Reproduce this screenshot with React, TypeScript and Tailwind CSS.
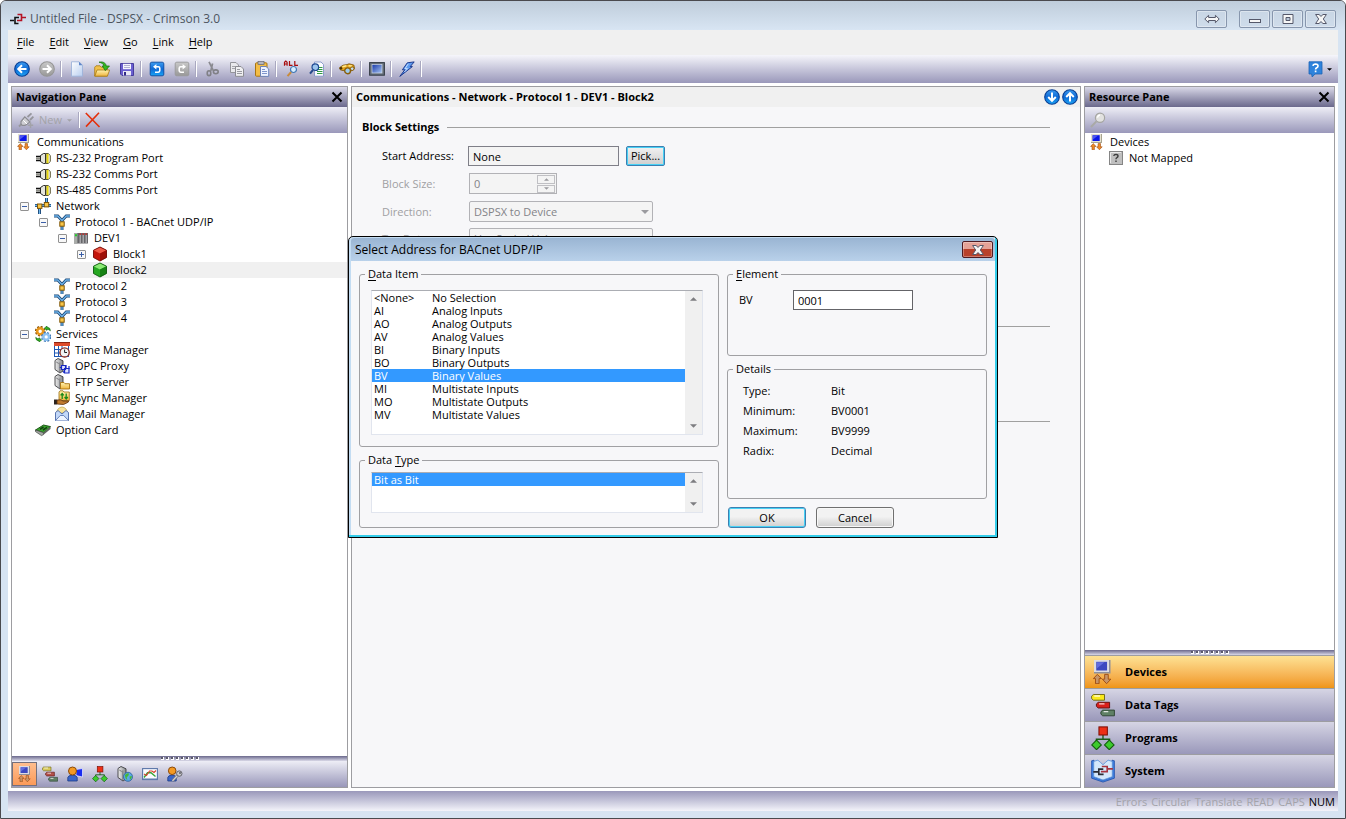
import { useState } from "react";
import type { ReactNode } from "react";
import clsx from "clsx";

function Svg({ children, className = "size-4" }: { children: ReactNode; className?: string }) {
  return (
    <svg viewBox="0 0 16 16" className={clsx("shrink-0", className)} aria-hidden="true">
      {children}
    </svg>
  );
}

/* ---------- shared gradients ---------- */

function Gradients() {
  return (
    <svg className="absolute size-0" aria-hidden="true">
      <defs>
        <linearGradient id="gBlue" x1="0" y1="0" x2="0" y2="1">
          <stop offset="0" stopColor="#3d9cf0" />
          <stop offset="0.5" stopColor="#0f6ad6" />
          <stop offset="1" stopColor="#1ba4f4" />
        </linearGradient>
        <linearGradient id="gGrey" x1="0" y1="0" x2="0" y2="1">
          <stop offset="0" stopColor="#c9c9c9" />
          <stop offset="1" stopColor="#989898" />
        </linearGradient>
        <linearGradient id="gFolder" x1="0" y1="0" x2="0" y2="1">
          <stop offset="0" stopColor="#fff3b0" />
          <stop offset="1" stopColor="#efb43c" />
        </linearGradient>
        <linearGradient id="gPaper" x1="0" y1="0" x2="1" y2="1">
          <stop offset="0" stopColor="#ffffff" />
          <stop offset="1" stopColor="#b9cff0" />
        </linearGradient>
        <linearGradient id="gScreen" x1="0" y1="0" x2="1" y2="1">
          <stop offset="0" stopColor="#1536a8" />
          <stop offset="1" stopColor="#a9c6f2" />
        </linearGradient>
        <linearGradient id="gSteel" x1="0" y1="0" x2="1" y2="0">
          <stop offset="0" stopColor="#efefef" />
          <stop offset="1" stopColor="#85888c" />
        </linearGradient>
      </defs>
    </svg>
  );
}

/* ---------- toolbar icons ---------- */

const RoundArrow = ({ turn = 0, grey = false }: { turn?: number; grey?: boolean }) => (
  <Svg>
    <circle cx="8" cy="8" r="7.3" fill={grey ? "url(#gGrey)" : "url(#gBlue)"} stroke={grey ? "#969696" : "#0a3f94"} strokeWidth="1.1" />
    <path
      d="M12.5 8H4.5M8 4.2L4.2 8L8 11.8"
      transform={`rotate(${turn} 8 8)`}
      fill="none"
      stroke="#fff"
      strokeWidth="2"
    />
  </Svg>
);

const NewDocIcon = () => (
  <Svg>
    <path d="M2.5 .8H10L13.5 4.3V15.2H2.5Z" fill="url(#gPaper)" stroke="#9db3da" strokeWidth="0.9" />
    <path d="M10 .8V4.3H13.5Z" fill="#5f86c8" />
  </Svg>
);

const OpenIcon = () => (
  <Svg>
    <path d="M.7 15V6.2L2 4.8H6L7.2 6.2H13.2V15Z" fill="#f2c14a" stroke="#a77a14" strokeWidth="0.8" />
    <path d="M.8 15.2L3 9H15.6L13.4 15.2Z" fill="url(#gFolder)" stroke="#a77a14" strokeWidth="0.8" />
    <path d="M5 1.2C9 .2 12 2 12.2 5H15.5L11.3 9.6L8.2 5H9.9C9.6 3 7.8 1.7 5 1.2Z" fill="#35b822" stroke="#127008" strokeWidth="0.7" />
  </Svg>
);

const SaveIcon = () => (
  <Svg>
    <path d="M1.5 2.5H14.5V14.5H3L1.5 13Z" fill="#6a5fd0" stroke="#463c9c" />
    <rect x="4" y="2.8" width="8" height="5.4" fill="#f4f4ff" />
    <path d="M5 4.5H11M5 6.5H11" stroke="#b2b0d2" />
    <rect x="4" y="10" width="8" height="4.5" fill="#e8e8f4" />
    <rect x="5" y="11" width="2" height="3.5" fill="#322a86" />
  </Svg>
);

const UndoIcon = ({ grey = false, flip = false }: { grey?: boolean; flip?: boolean }) => (
  <Svg className={clsx("size-4", flip && "-scale-x-100")}>
    <rect x="1.2" y="1.2" width="13.6" height="13.6" rx="1.6" fill={grey ? "url(#gGrey)" : "url(#gBlue)"} stroke={grey ? "#989898" : "#0a4aa0"} strokeWidth="0.9" />
    <path d="M6 5.8H9.3Q10.8 5.8 10.8 7.2V9.6Q10.8 11.2 9.3 11.2H6" fill="none" stroke="#fff" strokeWidth="1.6" />
    <path d="M7.4 3V8.6L4 5.8Z" fill="#fff" />
  </Svg>
);

const CutIcon = () => (
  <Svg>
    <path d="M5 .8L9.3 9.6M8.6 2.5L6.8 10" stroke="#8a8a90" strokeWidth="1.7" />
    <ellipse cx="5" cy="12.2" rx="1.8" ry="2.4" fill="none" stroke="#808086" strokeWidth="1.6" />
    <ellipse cx="11.8" cy="10.8" rx="2.4" ry="1.9" fill="none" stroke="#808086" strokeWidth="1.6" />
  </Svg>
);

const CopyIcon = () => (
  <Svg>
    <path d="M1.5 1.5H7L9.5 4V11.5H1.5Z" fill="#e9e9ec" stroke="#94949a" />
    <path d="M3 5.5H7M3 7.5H7" stroke="#a5a5aa" />
    <path d="M6.5 5.5H12L14.5 8V15.3H6.5Z" fill="#f0f0f2" stroke="#8c8c92" />
    <path d="M8 8.5H11M8 10.5H13M8 12.5H13" stroke="#9a9aa0" />
  </Svg>
);

const PasteIcon = () => (
  <Svg>
    <rect x="1.5" y="1.8" width="11.5" height="13.4" rx="1" fill="#f4bd45" stroke="#a87412" />
    <rect x="4" y=".6" width="6" height="3" fill="#b7b7bf" stroke="#66666e" strokeWidth="0.7" />
    <path d="M6.5 5.5H12L14.7 8V15.4H6.5Z" fill="#eef3ff" stroke="#6079b8" strokeWidth="0.9" />
    <path d="M8 8.5H11M8 10.5H13M8 12.5H13" stroke="#7f95cc" />
  </Svg>
);

const Lens = ({ x, y }: { x: number; y: number }) => (
  <g transform={`translate(${x} ${y})`}>
    <path d="M-2.3 2.5L-6 6.6" stroke="#c98b3a" strokeWidth="2" />
    <circle r="3" fill="#d8efff" stroke="#4478b4" strokeWidth="1.2" />
  </g>
);

const FindAllIcon = () => (
  <svg viewBox="0 0 16 16" className="size-4 shrink-0 overflow-visible" aria-hidden="true">
    <path
      d="M.5 4.8V1.2L1.8 0L3.1 1.2V4.8M.5 3H3.1M5.5 0V4.3H8.5M10.8 0V4.3H14"
      fill="none"
      stroke="#a80c0c"
      strokeWidth="1.2"
    />
    <Lens x={9.5} y={8.5} />
  </svg>
);

const FindDocIcon = () => (
  <Svg>
    <path d="M5.5 1H12L14.5 3.5V15.2H5.5Z" fill="#fbfdff" stroke="#8595c8" strokeWidth="0.9" />
    <path d="M9 6.5H13.5M8 8.5H13.5M8 10.5H13.5M8 12.5H13.5" stroke="#2f9b42" />
    <path d="M4 9L1 12.6" stroke="#274a8c" strokeWidth="2" />
    <circle cx="6.3" cy="6.2" r="3.3" fill="#9cc5ee" stroke="#1f4a92" strokeWidth="1.2" />
  </Svg>
);

const BinocularsIcon = () => (
  <Svg>
    <path d="M.6 6.6L4 4.2L8 3.6L10 2.8L14.8 4L15.6 7.6L13 9.8L9 9L4 9.6L1.2 8.8Z" fill="#e2a21c" stroke="#7a5206" strokeWidth="0.8" />
    <path d="M3.4 5.8L7.4 4.8M9.5 4.8L13 4.9" stroke="#ffe88c" strokeWidth="1.5" />
    <circle cx="8.6" cy="9.8" r="2.9" fill="#9ccbee" stroke="#8a5f0a" strokeWidth="1.4" />
    <circle cx="13.2" cy="7.7" r="1.8" fill="#c4e0f6" stroke="#8a5f0a" strokeWidth="1" />
    <circle cx="2" cy="7.3" r="1.3" fill="#4b3406" />
  </Svg>
);

const ScreenIcon = () => (
  <Svg>
    <rect x=".6" y="1.6" width="14.8" height="12.6" fill="#66717c" stroke="#333a44" />
    <rect x="3" y="3.5" width="10" height="8.5" fill="url(#gScreen)" stroke="#cfd8e4" strokeWidth="0.7" />
  </Svg>
);

const BoltIcon = () => (
  <Svg>
    <path d="M8.3 1.8L15.2 .9L11.2 5.6H13.4L.8 15.4L5.8 8.8H3.4Z" fill="#5f9cf0" stroke="#122f86" strokeWidth="0.9" />
    <path d="M9.3 2.8L6 7.6H8.6L5.4 11" fill="none" stroke="#d0e4ff" strokeWidth="0.9" />
  </Svg>
);

const HelpIcon = () => (
  <Svg>
    <path d="M1 .8H14V13H7L4.2 16L3.6 13H1Z" fill="#2f83dc" stroke="#1c62b4" strokeWidth="0.8" />
    <path d="M5 4.8Q5.2 3 7.6 3Q10.1 3.1 10 5Q9.9 6.2 8.7 6.8Q7.6 7.4 7.6 8.6M7.6 9.6V11.3" fill="none" stroke="#fff" strokeWidth="1.7" />
  </Svg>
);

const PlugIcon = () => (
  <Svg>
    <path d="M1 14.5L3.5 12M9.5 5L13.5 1.4M12 8L15.4 4.6" stroke="#96969c" strokeWidth="1.8" />
    <path d="M3 9.5L6.8 4.8L12 10L7.5 13.2Q2.2 14.5 3 9.5Z" fill="#cfcfd4" stroke="#8c8c92" strokeWidth="1.2" />
    <path d="M5.2 8.2L9 12" stroke="#fff" />
    <path d="M12.5 10.5V16M9.8 13.3H15.2" stroke="#a2a2a8" strokeWidth="1.5" />
  </Svg>
);

const RedXIcon = () => (
  <Svg>
    <path d="M.8 1L14.5 15M14 .8L1 14.6" fill="none" stroke="#e3300c" strokeWidth="1.6" />
  </Svg>
);

const SearchIcon = () => (
  <Svg>
    <path d="M1 15L6.4 9.4" stroke="#a9a9a6" strokeWidth="2" />
    <circle cx="10" cy="5.8" r="4.6" fill="#e2e2e0" stroke="#a5a5a2" strokeWidth="1.2" />
    <path d="M7.4 5.6Q7.8 3.4 10 3" fill="none" stroke="#fff" strokeWidth="1.4" />
  </Svg>
);

/* ---------- tree and category icons ---------- */

const DevicesIcon = ({ className, muted = false }: { className?: string; muted?: boolean }) => (
  <Svg className={className}>
    <path d="M2 0H13V9H2Z" fill={muted ? "#8f8f9a" : "#a8a490"} />
    <path d="M2 0H12V8H2Z" fill={muted ? "#dcdce2" : "#e4e1d0"} />
    <rect x="3.5" y="1.2" width="7.2" height="5.8" fill={muted ? "#3c48c0" : "#0b16e8"} />
    <path d="M4 1.5H9L4 5.5Z" fill="#7b86f4" opacity="0.6" />
    <path d="M4.2 9.6L7 12.4H5.4V15.8H3V12.4H1.6Z" fill={muted ? "#c79468" : "#f08a24"} stroke="#9c4a10" strokeWidth="0.6" />
    <path d="M9.1 9.6H11.5V12.8H13.2L10.4 15.8L7.6 12.8H9.1Z" fill={muted ? "#c79468" : "#f08a24"} stroke="#9c4a10" strokeWidth="0.6" />
  </Svg>
);

const PortIcon = () => (
  <Svg>
    <path d="M1 6.5H6M1 10.5H6" stroke="#111" strokeWidth="1.4" />
    <path d="M1 8.5H6" stroke="#8c8c84" strokeWidth="2" />
    <path d="M5.5 5.5L8.5 3.5H10.5V13.5H8.5L5.5 11.5Z" fill="#e6e6de" stroke="#2a2a26" />
    <path d="M11 3.5H13.2L15.3 5.5V11.5L13.2 13.5H11Z" fill="#f0f0e8" stroke="#4d4a22" strokeWidth="0.9" />
    <path d="M12.6 4V13" stroke="#e8d80c" strokeWidth="1.9" />
  </Svg>
);

const NetworkIcon = () => (
  <Svg>
    <path d="M0 7.5H16M4.5 7V16M11.5 0V8" stroke="#16406e" strokeWidth="3" />
    <path d="M0 7.5H16M4.5 7V16M11.5 0V8" stroke="#6fb4ea" strokeWidth="1.3" />
    <rect x="2.5" y="6" width="4.4" height="4.4" fill="#f9c648" stroke="#7f5606" />
    <rect x="9.3" y="4.5" width="4.4" height="4.4" fill="#f9c648" stroke="#7f5606" />
  </Svg>
);

const ProtocolIcon = () => (
  <Svg>
    <path d="M0 2H3.8L8 6.5V16M16 2H12.2L8 6.5" fill="none" stroke="#16406e" strokeWidth="2.9" />
    <path d="M0 2H3.8L8 6.5V16M16 2H12.2L8 6.5" fill="none" stroke="#6fb4ea" strokeWidth="1.3" />
    <rect x="5.8" y="7.8" width="4.4" height="4.4" fill="#f9c648" stroke="#7f5606" />
  </Svg>
);

const PlcIcon = () => (
  <Svg>
    <rect x="1" y="3" width="14" height="10.5" fill="#66666a" />
    <rect x="1" y="3" width="3.4" height="10.5" fill="#a9aca9" />
    <path d="M7.2 5V13M10.2 5V13M13.2 5V13" stroke="#b6b6ba" strokeWidth="1.2" />
    <path d="M2 4.2H4V6.2H2Z" fill="#20cc28" />
    <path d="M6.4 3.5H8V4.7H6.4ZM9.4 3.5H11V4.7H9.4ZM12.4 3.5H14V4.7H12.4Z" fill="#e02a24" />
  </Svg>
);

const CubeIcon = ({ red = false }: { red?: boolean }) => (
  <Svg>
    <path d="M8 1L14.5 4.2V11.5L8 15L1.5 11.5V4.2Z" fill={red ? "#c4160c" : "#27a822"} />
    <path d="M8 1L14.5 4.2L8 7.6L1.5 4.2Z" fill={red ? "#ee5a48" : "#8bea74"} />
    <path d="M8 7.6L14.5 4.2V11.5L8 15Z" fill={red ? "#9e1008" : "#168214"} />
    <path d="M8 1L14.5 4.2V11.5L8 15L1.5 11.5V4.2Z" fill="none" stroke={red ? "#740a06" : "#0d5a0e"} strokeWidth="0.9" />
  </Svg>
);

const ServicesIcon = () => (
  <Svg>
    <circle cx="5.2" cy="5.2" r="4.1" fill="none" stroke="#8a5406" strokeWidth="2.4" strokeDasharray="1.9 1.3" />
    <circle cx="5.2" cy="5.2" r="3" fill="none" stroke="#e8961a" strokeWidth="2.6" />
    <circle cx="11.2" cy="10.9" r="4" fill="none" stroke="#3c78b8" strokeWidth="2.2" strokeDasharray="1.9 1.3" />
    <circle cx="11.2" cy="10.9" r="2.8" fill="none" stroke="#8cc2f2" strokeWidth="2.4" />
    <path d="M9.3 2.2L12 0V1.2Q15.5 1.4 15.4 4.8Q14 3.3 12 3.3V4.4Z" fill="#34b324" stroke="#0f5c0a" strokeWidth="0.6" />
    <path d="M6.6 14L4 16V14.9Q.7 14.7.7 11.4Q2.2 12.8 4 12.8V11.7Z" fill="#34b324" stroke="#0f5c0a" strokeWidth="0.6" />
  </Svg>
);

const TimeIcon = () => (
  <Svg>
    <rect x=".5" y="3.5" width="14" height="11" fill="#fff" stroke="#1f58b4" />
    <path d="M1 7.5H14M1 11H14M4.5 4V14.5M8 4V14.5" stroke="#1f58b4" />
    <rect x="0" y="0" width="16" height="4" fill="#dd4b2a" />
    <path d="M0 .5H16" stroke="#8e2410" />
    <circle cx="10.6" cy="10.4" r="4.6" fill="#f2f5f6" stroke="#8c2a1c" strokeWidth="1.3" />
    <path d="M10.6 7.5V10.5H13" fill="none" stroke="#222" />
  </Svg>
);

const Server = () => (
  <>
    <path d="M1 2.5L4 .5L9 2.8V13L6 15L1 11.5Z" fill="url(#gSteel)" stroke="#3c3c40" strokeWidth="0.9" />
    <path d="M5.8 4.5V14.8M2.2 4L4.8 5.5" stroke="#6a6a70" strokeWidth="0.8" />
  </>
);

const OpcIcon = () => (
  <Svg>
    <Server />
    <path d="M7.5 7.5H11.5V11.5H7.5ZM10.5 10.5H15V15H10.5Z" fill="#dfe4ff" stroke="#1728c4" strokeWidth="1.2" />
    <path d="M5.8 9.5H8M12 7V10M9 14.5L11 12.5M15 8V11" stroke="#1728c4" strokeWidth="1.2" />
  </Svg>
);

const FtpIcon = () => (
  <Svg>
    <Server />
    <path d="M6.5 15V8.5H10L11 9.7H15.5V15Z" fill="url(#gFolder)" stroke="#a8730e" strokeWidth="0.9" />
  </Svg>
);

const SyncIcon = () => (
  <Svg>
    <path d="M5 9.5V2L6 .8H9L10 2H15.3V10.5H5Z" fill="url(#gFolder)" stroke="#9a6c10" strokeWidth="0.8" />
    <path d="M8.2 9V4M6.6 5.4L8.2 3.6L9.8 5.4M12.2 3.6V8.6M10.6 7L12.2 9L13.8 7" fill="none" stroke="#1a8a1a" strokeWidth="1.3" />
    <path d="M0 9.5H3V14.5H0Z" fill="#2a2420" />
    <path d="M3 10L7 9.8L9 11H14.5Q15 12.2 13 12.8L9.5 14.5L3 14Z" fill="#c07a2c" stroke="#5a300a" strokeWidth="0.8" />
  </Svg>
);

const MailIcon = () => (
  <Svg>
    <path d="M4 3Q8 -1 12 3L14 7H2Z" fill="#f8e39a" stroke="#c2a445" strokeWidth="0.7" />
    <path d="M1.5 6.5L4 4.5L8 8L12 4.5L14.5 6.5V14.5H1.5Z" fill="#c3d8f8" stroke="#4a68a8" strokeWidth="0.9" />
    <path d="M1.5 14.5L6.3 9.5H9.7L14.5 14.5" fill="#eef4ff" stroke="#4a68a8" strokeWidth="0.8" />
  </Svg>
);

const CardIcon = () => (
  <Svg>
    <path d="M.5 8L8.5 3L15.5 4.6L8.5 10.6Z" fill="#3aa52e" stroke="#154d10" strokeWidth="0.9" />
    <path d="M.5 8V9.6L6.5 13.6L8.5 12.6V10.6Z" fill="#a4a9a4" stroke="#3c403c" strokeWidth="0.7" />
    <path d="M8.5 10.6L15.5 4.6V7L8.5 12.8Z" fill="#60665f" />
    <path d="M5 7.3L8.5 5M8 8L12 5.4" stroke="#123e10" strokeWidth="1.5" />
  </Svg>
);

const UnmappedIcon = () => (
  <Svg>
    <rect x="1.5" y="1.5" width="13" height="13" fill="#bfbfbf" stroke="#858585" />
    <path d="M2.5 13V2.5H13" fill="none" stroke="#e8e8e8" />
    <path d="M5.8 6Q6 4.4 8 4.4Q10.1 4.5 10 6.1Q9.9 7.1 8.9 7.7Q8 8.2 8 9.2M8 10.6V12" fill="none" stroke="#3c3c3c" strokeWidth="1.4" />
  </Svg>
);

const TagsIcon = ({ className, muted = false }: { className?: string; muted?: boolean }) => (
  <Svg className={className}>
    <path d="M1.6 1H9V4.8H1.6L.4 3.7V2.1Z" fill={muted ? "#d8c95c" : "#fae91c"} stroke="#6b6414" strokeWidth="0.6" />
    <path d="M4.8 6.2H12.4V10H4.8L3.6 8.9V7.3Z" fill={muted ? "#b4524c" : "#d8201c"} stroke="#5c0e0c" strokeWidth="0.6" />
    <path d="M7.8 11.4H15.6V15.2H7.8L6.6 14.1V12.5Z" fill="#5f8065" stroke="#29402c" strokeWidth="0.6" />
    <path d="M2.2 2H6M5.4 7.2H9M8.4 12.4H11.5" stroke="#fff" strokeWidth="0.9" opacity="0.8" />
  </Svg>
);

const ProgramsIcon = ({ className }: { className?: string }) => (
  <Svg className={className}>
    <path d="M8 6V9M3.6 11V8.8H12.4V11" fill="none" stroke="#1d5c18" strokeWidth="0.9" />
    <rect x="5.3" y=".6" width="5.6" height="5.4" fill="#ee2f16" stroke="#7e1006" strokeWidth="0.7" />
    <path d="M3.7 9.4L6.9 12.6L3.7 15.8L.5 12.6ZM12.2 9.4L15.4 12.6L12.2 15.8L9 12.6Z" fill="#3ccb2c" stroke="#115c0c" strokeWidth="0.7" />
  </Svg>
);

const SystemIcon = ({ className }: { className?: string }) => (
  <Svg className={className}>
    <path d="M.4 1.2L2 .8V12L8 14.2L14 12V.8L15.6 1.2V12.8L8 15.4L.4 12.8Z" fill="#3f7fe0" stroke="#1d4ea8" strokeWidth="0.5" />
    <path d="M1.8 1.6L4.6 .8Q6.5 2.4 8 3.8Q9.5 2.4 11.4 .8L14.2 1.6V11.8L8 14L1.8 11.8Z" fill="#d5e8fb" stroke="#5f95dc" strokeWidth="0.6" />
    <path d="M1.5 8.6H5M8.2 6.7H5.2V10.2H8.4" fill="none" stroke="#2c2c34" strokeWidth="1.1" />
    <path d="M14.6 6.6H11M7.2 5H10.8V8.4H6.6" fill="none" stroke="#a83440" strokeWidth="1.1" />
  </Svg>
);

const UserScreenIcon = () => (
  <Svg>
    <path d="M9 3.5L15.5 2.5V11L9 9.6Z" fill="#1a2cf0" stroke="#dfe2ff" strokeWidth="0.8" />
    <path d="M.8 15V11.5Q1.2 9.2 5.5 9.2Q9.8 9.2 10.2 11.5V15Z" fill="#3a66c8" stroke="#1c3a86" strokeWidth="0.8" />
    <circle cx="5.5" cy="5" r="4" fill="#f49a24" stroke="#8c4a08" strokeWidth="1" />
  </Svg>
);

const WebIcon = () => (
  <Svg>
    <Server />
    <circle cx="11" cy="10.8" r="4.5" fill="#5aa8e6" stroke="#2a5f9c" strokeWidth="0.8" />
    <path d="M8 9Q9.5 6.8 12 7.4L11.5 9.6L9.6 11.4L10.4 14Q8 12.8 8 9ZM12.6 10.4L15 10Q14.8 12.8 13 14Z" fill="#45b83a" />
  </Svg>
);

const ChartIcon = () => (
  <Svg>
    <rect x=".6" y="2.6" width="14.8" height="11" fill="#fbfbff" stroke="#5a76a8" strokeWidth="1.1" />
    <path d="M2 11.5L5.5 6.8H9L13.5 10.5" fill="none" stroke="#36a636" strokeWidth="1.4" />
    <path d="M2 8L4.5 9.5L7.5 5H10L12 6.5L14 4.5" fill="none" stroke="#d8442c" strokeWidth="1.1" />
    <path d="M1.5 12.5H14.5" stroke="#5a76a8" strokeDasharray="1 1" />
  </Svg>
);

const UserKeyIcon = () => (
  <Svg>
    <path d="M.8 15V11.5Q1.2 9.2 5 9.2Q8.8 9.2 9.2 11.5V15Z" fill="#3a66c8" stroke="#1c3a86" strokeWidth="0.8" />
    <circle cx="5.2" cy="4.8" r="3.8" fill="#f49a24" stroke="#8c4a08" strokeWidth="1" />
    <path d="M10.5 9.5L5.5 14.8" stroke="#77777e" strokeWidth="2.6" />
    <path d="M10.5 9.5L5.5 14.8" stroke="#d4d4da" strokeWidth="1.2" />
    <circle cx="12.3" cy="7.6" r="2.7" fill="#c8c8ce" stroke="#66666c" strokeWidth="1" />
    <circle cx="13" cy="7" r="0.9" fill="#55555c" />
  </Svg>
);

/* ---------- small pieces ---------- */

const Triangle = ({ up = false, className }: { up?: boolean; className?: string }) => (
  <svg viewBox="0 0 8 4" className={clsx("shrink-0", className)} aria-hidden="true">
    <path d={up ? "M4 0L8 4H0Z" : "M0 0H8L4 4Z"} fill="currentColor" />
  </svg>
);

const Separator = () => (
  <span className="flex w-[5px] shrink-0 justify-center" aria-hidden="true">
    <span className="h-4 w-px bg-white shadow-[-1px_0_0_#a9a8c0]" />
  </span>
);

function ToolButton({ label, children, disabled }: { label: string; children: ReactNode; disabled?: boolean }) {
  return (
    <button type="button" aria-label={label} disabled={disabled} className="flex h-6 w-[25px] shrink-0 items-center justify-center">
      {children}
    </button>
  );
}

function PaneHeader({ title }: { title: string }) {
  return (
    <header className="flex h-5 shrink-0 items-center justify-between bg-linear-to-b from-[#dad9e8] to-[#6b698c] pr-1 pl-1">
      <h2 className="font-bold">{title}</h2>
      <button type="button" aria-label={`Close ${title}`} className="flex size-3 items-center justify-center">
        <svg viewBox="0 0 12 12" className="size-3" aria-hidden="true">
          <path d="M1.5 1.5L10.5 10.5M10.5 1.5L1.5 10.5" stroke="#000" strokeWidth="2" />
        </svg>
      </button>
    </header>
  );
}

function Splitter() {
  return (
    <div className="flex h-[5px] shrink-0 items-center justify-center gap-[2px] bg-linear-to-b from-[#6b698c] to-[#dad9e8]" role="separator">
      {Array.from({ length: 8 }, (_, i) => (
        <span key={i} className="size-[3px] border-r border-b border-white bg-[#5b5a6c]" />
      ))}
    </div>
  );
}

interface TreeItem {
  label: string;
  depth: number;
  icon: ReactNode;
  toggle?: "open" | "closed";
}

const indent = ["pl-1", "pl-1", "pl-[23px]", "pl-[42px]", "pl-[61px]"];

function Tree({ items, selected, onSelect, label }: {
  items: TreeItem[];
  selected?: string;
  onSelect?: (label: string) => void;
  label: string;
}) {
  return (
    <ul role="tree" aria-label={label} className="min-h-0 flex-1 overflow-hidden bg-white pt-px">
      {items.map((item) => (
        <li
          key={item.label}
          role="treeitem"
          aria-selected={item.label === selected}
          aria-expanded={item.toggle ? item.toggle === "open" : undefined}
          onClick={() => onSelect?.(item.label)}
          className={clsx("flex h-4 items-center", indent[item.depth], item.label === selected && "bg-[#f0f0f0]")}
        >
          {item.depth > 0 && (
            <span className="flex w-[19px] shrink-0 justify-center pr-[2px]">
              {item.toggle && (
                <button
                  type="button"
                  aria-label={`Toggle ${item.label}`}
                  className="flex size-[9px] items-center justify-center rounded-[1px] border border-[#919191] bg-[#f8f8f8]"
                >
                  <svg viewBox="0 0 5 5" className="size-[5px] shrink-0" aria-hidden="true">
                    <path d={item.toggle === "open" ? "M0 2.5H5" : "M0 2.5H5M2.5 0V5"} stroke="#3b5fa8" />
                  </svg>
                </button>
              )}
            </span>
          )}
          {item.icon}
          <span className="pl-[5px] whitespace-nowrap">{item.label}</span>
        </li>
      ))}
    </ul>
  );
}

/* ---------- title bar, menu, toolbar ---------- */

const captionButton =
  "flex h-[18px] w-[31px] items-center justify-center rounded-[2px] border border-[#8796ad] bg-[#cad7e6]/60 shadow-[inset_0_0_0_1px_rgba(255,255,255,0.35)]";

const CaptionGlyph = ({ children }: { children: ReactNode }) => (
  <svg viewBox="0 0 16 12" className="h-3 w-4" aria-hidden="true" fill="#f6f6f6" stroke="#55586a">
    {children}
  </svg>
);

const CloseGlyph = () => (
  <CaptionGlyph>
    <path d="M2.6 1.5H6L8 3.4L10 1.5H13.4L10.3 6L13.4 10.5H10L8 8.6L6 10.5H2.6L5.7 6Z" />
  </CaptionGlyph>
);

function TitleBar() {
  return (
    <div className="flex h-[29px] shrink-0 items-center bg-linear-to-b from-[#bfcddb] to-[#d8e5f3] px-[9px] pt-[6px]">
      <svg viewBox="0 0 16 12" className="h-3 w-4 shrink-0" aria-hidden="true">
        <path d="M0 7.5H4M9 4.5H5V10.5H8.5" fill="none" stroke="#111" strokeWidth="1.6" />
        <path d="M16 4.5H12M7.5 1.5H11.5V7.5H7" fill="none" stroke="#b51224" strokeWidth="1.6" />
      </svg>
      <h1 className="pl-1 text-xs text-[#4c5560]">Untitled File - DSPSX - Crimson 3.0</h1>
      <div className="ml-auto flex gap-[2px]">
        <button type="button" aria-label="Move to other screen" className={clsx(captionButton, "mr-[10px]")}>
          <CaptionGlyph>
            <path d="M.8 6L4.6 2.3V4.5H11.4V2.3L15.2 6L11.4 9.7V7.5H4.6V9.7Z" />
          </CaptionGlyph>
        </button>
        <button type="button" aria-label="Minimize" className={captionButton}>
          <CaptionGlyph>
            <rect x="2.5" y="6.5" width="11" height="3" />
          </CaptionGlyph>
        </button>
        <button type="button" aria-label="Restore" className={captionButton}>
          <CaptionGlyph>
            <path d="M3 1.5H13V10.5H3Z" />
            <path d="M6 4.5H10V7.5H6Z" fill="#b9c6d8" />
          </CaptionGlyph>
        </button>
        <button type="button" aria-label="Close" className={captionButton}>
          <CloseGlyph />
        </button>
      </div>
    </div>
  );
}

const menus = ["File", "Edit", "View", "Go", "Link", "Help"];

function MenuBar() {
  return (
    <nav aria-label="Main menu" className="flex h-[25px] shrink-0 items-center gap-[15px] bg-[#f0f0f0] px-[9px] pb-[2px]">
      {menus.map((name) => (
        <button key={name} type="button">
          <span className="underline underline-offset-2">{name[0]}</span>
          {name.slice(1)}
        </button>
      ))}
    </nav>
  );
}

function Toolbar() {
  return (
    <div role="toolbar" aria-label="Standard" className="flex h-7 shrink-0 items-center bg-linear-to-b from-[#f6f6fb] to-[#9a98ba] pr-[6px] pl-px">
      <ToolButton label="Back"><RoundArrow /></ToolButton>
      <ToolButton label="Forward" disabled><RoundArrow turn={180} grey /></ToolButton>
      <Separator />
      <ToolButton label="New"><NewDocIcon /></ToolButton>
      <ToolButton label="Open"><OpenIcon /></ToolButton>
      <ToolButton label="Save"><SaveIcon /></ToolButton>
      <Separator />
      <ToolButton label="Undo"><UndoIcon /></ToolButton>
      <ToolButton label="Redo" disabled><UndoIcon grey flip /></ToolButton>
      <Separator />
      <ToolButton label="Cut" disabled><CutIcon /></ToolButton>
      <ToolButton label="Copy" disabled><CopyIcon /></ToolButton>
      <ToolButton label="Paste"><PasteIcon /></ToolButton>
      <Separator />
      <ToolButton label="Find all"><FindAllIcon /></ToolButton>
      <ToolButton label="Find in file"><FindDocIcon /></ToolButton>
      <Separator />
      <ToolButton label="Search"><BinocularsIcon /></ToolButton>
      <Separator />
      <ToolButton label="Emulator"><ScreenIcon /></ToolButton>
      <Separator />
      <ToolButton label="Download"><BoltIcon /></ToolButton>
      <Separator />
      <button type="button" aria-label="Help" className="ml-auto flex items-center gap-[3px]">
        <HelpIcon />
        <Triangle className="h-[3px] w-[5px]" />
      </button>
    </div>
  );
}

/* ---------- panes ---------- */

const navItems: TreeItem[] = [
  { label: "Communications", depth: 0, icon: <DevicesIcon /> },
  { label: "RS-232 Program Port", depth: 1, icon: <PortIcon /> },
  { label: "RS-232 Comms Port", depth: 1, icon: <PortIcon /> },
  { label: "RS-485 Comms Port", depth: 1, icon: <PortIcon /> },
  { label: "Network", depth: 1, icon: <NetworkIcon />, toggle: "open" },
  { label: "Protocol 1 - BACnet UDP/IP", depth: 2, icon: <ProtocolIcon />, toggle: "open" },
  { label: "DEV1", depth: 3, icon: <PlcIcon />, toggle: "open" },
  { label: "Block1", depth: 4, icon: <CubeIcon red />, toggle: "closed" },
  { label: "Block2", depth: 4, icon: <CubeIcon /> },
  { label: "Protocol 2", depth: 2, icon: <ProtocolIcon /> },
  { label: "Protocol 3", depth: 2, icon: <ProtocolIcon /> },
  { label: "Protocol 4", depth: 2, icon: <ProtocolIcon /> },
  { label: "Services", depth: 1, icon: <ServicesIcon />, toggle: "open" },
  { label: "Time Manager", depth: 2, icon: <TimeIcon /> },
  { label: "OPC Proxy", depth: 2, icon: <OpcIcon /> },
  { label: "FTP Server", depth: 2, icon: <FtpIcon /> },
  { label: "Sync Manager", depth: 2, icon: <SyncIcon /> },
  { label: "Mail Manager", depth: 2, icon: <MailIcon /> },
  { label: "Option Card", depth: 1, icon: <CardIcon /> },
];

const navTabs = [
  { label: "Communications", icon: <DevicesIcon muted /> },
  { label: "Data Tags", icon: <TagsIcon muted /> },
  { label: "Display Pages", icon: <UserScreenIcon /> },
  { label: "Programs", icon: <ProgramsIcon /> },
  { label: "Web Server", icon: <WebIcon /> },
  { label: "Data Logger", icon: <ChartIcon /> },
  { label: "Security", icon: <UserKeyIcon /> },
];

const subToolbar =
  "flex h-[26px] shrink-0 items-center bg-linear-to-b from-[#eeeef6] to-[#9a98ba]";

function NavigationPane() {
  const [selected, setSelected] = useState("Block2");

  return (
    <aside className="flex w-[337px] shrink-0 flex-col border border-[#9d9da1]">
      <PaneHeader title="Navigation Pane" />
      <div className={clsx(subToolbar, "pl-[6px]")}>
        <button type="button" disabled className="flex items-center gap-[5px] text-[#a3a3a8]">
          <PlugIcon />
          New
          <Triangle className="h-[3px] w-[5px]" />
        </button>
        <span className="w-[5px]" />
        <Separator />
        <span className="w-[3px]" />
        <button type="button" aria-label="Delete"><RedXIcon /></button>
      </div>
      <Tree items={navItems} selected={selected} onSelect={setSelected} label="Navigation" />
      <Splitter />
      <div role="tablist" aria-label="Categories" className="flex h-[26px] shrink-0 items-center bg-linear-to-b from-[#eeeef6] to-[#9a98ba]">
        {navTabs.map((tab, i) => (
          <button
            key={tab.label}
            type="button"
            role="tab"
            aria-label={tab.label}
            aria-selected={i === 0}
            className={clsx(
              "flex h-6 w-[25px] items-center justify-center",
              i === 0 && "border border-[#74707c] bg-linear-to-b from-[#ffbe8e] to-[#fb9a58]",
            )}
          >
            {tab.icon}
          </button>
        ))}
      </div>
    </aside>
  );
}

const fieldLabel = "w-[86px] shrink-0";
const disabledLabel = "w-[87px] shrink-0 text-[#a0a0a3]";

function DisabledSelect({ id, value }: { id: string; value: string }) {
  return (
    <span className="relative flex items-center">
      <select
        id={id}
        disabled
        className="h-[21px] w-[184px] appearance-none rounded-[2px] border border-[#b2b2b6] bg-[#f4f4f4] pl-1 text-[#838387] opacity-100"
      >
        <option>{value}</option>
      </select>
      <Triangle className="absolute right-1 h-1 w-2 text-[#9b9b9f]" />
    </span>
  );
}

function EditorPane() {
  return (
    <main className="flex min-w-0 flex-1 flex-col border border-[#9d9da1] bg-[#f7f7f9]">
      <header className="flex h-5 shrink-0 items-center bg-[#f0f0f0] px-1">
        <h2 className="font-bold">Communications - Network - Protocol 1 - DEV1 - Block2</h2>
        <div className="-mr-[2px] ml-auto flex gap-[2px]">
          <button type="button" aria-label="Next item"><RoundArrow turn={-90} /></button>
          <button type="button" aria-label="Previous item"><RoundArrow turn={90} /></button>
        </div>
      </header>

      <div className="flex flex-col pt-3 pr-[30px] pl-[10px]">
        <div className="flex h-4 items-center gap-2">
          <h3 className="font-bold">Block Settings</h3>
          <hr className="flex-1 border-[#a0a0a0]" />
        </div>

        <div className="flex flex-col gap-[6px] pt-[11px] pl-5">
          <div className="flex h-5 items-center">
            <label htmlFor="start" className={fieldLabel}>Start Address:</label>
            <input id="start" readOnly value="None" className="h-5 w-[151px] border border-[#7f7f88] bg-[#f4f4f4] px-1" />
            <button
              type="button"
              className="ml-[7px] h-5 w-[39px] rounded-[2px] border border-[#3c7fb1] bg-linear-to-b from-[#f2f2f2] to-[#cfcfcf] shadow-[inset_0_0_0_1px_#48d1f5]"
            >
              Pick...
            </button>
          </div>
          <div className="flex h-[23px] items-center">
            <label htmlFor="size" className={disabledLabel}>Block Size:</label>
            <div className="flex h-[21px] w-[88px] items-center border border-[#b2b2b6] bg-[#f4f4f4]">
              <input id="size" disabled value="0" className="min-w-0 flex-1 px-1 text-[#838387]" />
              <div className="flex flex-col gap-px pr-px">
                <button type="button" disabled aria-label="Increase" className="flex h-[9px] w-[18px] items-center justify-center border border-[#c0c0c4]">
                  <Triangle up className="h-[3px] w-[5px] text-[#9b9b9f]" />
                </button>
                <button type="button" disabled aria-label="Decrease" className="flex h-[8px] w-[18px] items-center justify-center border border-[#c0c0c4]">
                  <Triangle className="h-[3px] w-[5px] text-[#9b9b9f]" />
                </button>
              </div>
            </div>
          </div>
          <div className="flex h-[21px] items-center">
            <label htmlFor="direction" className={disabledLabel}>Direction:</label>
            <DisabledSelect id="direction" value="DSPSX to Device" />
          </div>
          <div className="flex h-[21px] items-center">
            <label htmlFor="tagdata" className={disabledLabel}>Tag Data:</label>
            <DisabledSelect id="tagdata" value="Use Scaled Values" />
          </div>
        </div>

        <hr className="mt-[77px] border-[#a0a0a0]" />
        <hr className="mt-[94px] border-[#a0a0a0]" />
      </div>
    </main>
  );
}

const resourceItems: TreeItem[] = [
  { label: "Devices", depth: 0, icon: <DevicesIcon /> },
  { label: "Not Mapped", depth: 1, icon: <UnmappedIcon /> },
];

const categories = [
  { label: "Devices", icon: <DevicesIcon className="size-6" muted /> },
  { label: "Data Tags", icon: <TagsIcon className="size-6" /> },
  { label: "Programs", icon: <ProgramsIcon className="size-6" /> },
  { label: "System", icon: <SystemIcon className="size-6" /> },
];

function ResourcePane() {
  const [active, setActive] = useState("Devices");

  return (
    <aside className="flex w-[251px] shrink-0 flex-col border border-[#9d9da1]">
      <PaneHeader title="Resource Pane" />
      <div className={clsx(subToolbar, "pl-[5px]")}>
        <button type="button" aria-label="Find" disabled><SearchIcon /></button>
      </div>
      <Tree items={resourceItems} label="Resources" />
      <Splitter />
      {categories.map((category) => (
        <button
          key={category.label}
          type="button"
          aria-pressed={category.label === active}
          onClick={() => setActive(category.label)}
          className={clsx(
            "flex h-[33px] shrink-0 items-center gap-[10px] border-t border-[#9d9da1] bg-linear-to-b pl-[6px] font-bold",
            category.label === active ? "from-[#fde293] to-[#ef9512]" : "from-[#d6d5e4] to-[#9a98ba]",
          )}
        >
          {category.icon}
          {category.label}
        </button>
      ))}
    </aside>
  );
}

/* ---------- address dialog ---------- */

const dataItems = [
  ["<None>", "No Selection"],
  ["AI", "Analog Inputs"],
  ["AO", "Analog Outputs"],
  ["AV", "Analog Values"],
  ["BI", "Binary Inputs"],
  ["BO", "Binary Outputs"],
  ["BV", "Binary Values"],
  ["MI", "Multistate Inputs"],
  ["MO", "Multistate Outputs"],
  ["MV", "Multistate Values"],
];

const details = [
  ["Type:", "Bit"],
  ["Minimum:", "BV0001"],
  ["Maximum:", "BV9999"],
  ["Radix:", "Decimal"],
];

const groupBox = "rounded-[3px] border border-[#a0a0a3] px-[11px]";
const legend = "-ml-[6px] h-4 px-[3px] leading-4";
const optionRow = "flex h-[13px] items-center pl-[2px] leading-[13px]";

function ListBox({ label, children, className }: { label: string; children: ReactNode; className: string }) {
  return (
    <div className={clsx("flex border border-[#e1e5ee] border-t-[#abadb3] bg-white", className)}>
      <div role="listbox" aria-label={label} className="flex-1">
        {children}
      </div>
      <div className="flex w-[17px] flex-col items-center justify-between bg-[#f0f0f0] py-[6px] text-[#7d7d80]">
        <Triangle up className="h-1 w-[7px]" />
        <Triangle className="h-1 w-[7px]" />
      </div>
    </div>
  );
}

function AddressDialog() {
  const [item, setItem] = useState("BV");
  const [address, setAddress] = useState("0001");

  return (
    <div
      role="dialog"
      aria-labelledby="dialog-title"
      className="absolute top-[235px] left-1/2 w-[650px] -translate-x-1/2 rounded-t-[5px] border border-black bg-[#f7f7f9] shadow-[inset_-2px_-2px_0_#35cdea,inset_2px_1px_0_#c3dcf2]"
    >
      <div className="mx-[2px] mt-px flex h-[23px] items-center rounded-t-[3px] bg-linear-to-b from-[#9ab5d3] to-[#b9d1ea] pr-[2px] pl-1">
        <h2 id="dialog-title" className="text-xs">Select Address for BACnet UDP/IP</h2>
        <button
          type="button"
          aria-label="Close dialog"
          className="ml-auto flex h-[17px] w-[31px] items-center justify-center rounded-[2px] border border-[#4f1b22] bg-linear-to-b from-[#e5a297] from-45% to-[#b8412b] to-50% shadow-[inset_0_0_0_1px_rgba(255,255,255,0.3)]"
        >
          <CloseGlyph />
        </button>
      </div>

      <div className="flex gap-2 px-[10px] pt-[5px] pb-[9px]">
        <div className="flex flex-1 flex-col gap-[5px]">
          <fieldset className={clsx(groupBox, "h-[181px] pt-2")}>
            <legend className={legend}>
              <span className="underline underline-offset-2">D</span>ata Item
            </legend>
            <ListBox label="Data Item" className="mr-1 h-[145px]">
              {dataItems.map(([code, name]) => (
                <div
                  key={code}
                  role="option"
                  aria-selected={code === item}
                  onClick={() => setItem(code)}
                  className={clsx(optionRow, code === item && "bg-[#3399ff] text-white")}
                >
                  <span className="w-[58px]">{code}</span>
                  <span>{name}</span>
                </div>
              ))}
            </ListBox>
          </fieldset>

          <fieldset className={clsx(groupBox, "h-[76px] pt-1")}>
            <legend className={legend}>
              Data <span className="underline underline-offset-2">T</span>ype
            </legend>
            <ListBox label="Data Type" className="mr-1 h-[41px]">
              <div role="option" aria-selected className={clsx(optionRow, "bg-[#3399ff] text-white")}>
                Bit as Bit
              </div>
            </ListBox>
          </fieldset>
        </div>

        <div className="flex w-[260px] flex-col gap-[5px]">
          <fieldset className={clsx(groupBox, "h-[90px] pt-2")}>
            <legend className={legend}>
              <span className="underline underline-offset-2">E</span>lement
            </legend>
            <div className="flex items-center">
              <label htmlFor="element" className="w-[54px]">BV</label>
              <input
                id="element"
                value={address}
                onChange={(e) => setAddress(e.target.value)}
                className="h-5 w-[120px] border border-[#646468] bg-white px-1"
              />
            </div>
          </fieldset>

          <fieldset className={clsx(groupBox, "h-[138px] pt-[6px]")}>
            <legend className={legend}>Details</legend>
            <dl className="flex flex-col gap-1 pl-1">
              {details.map(([term, value]) => (
                <div key={term} className="flex leading-4">
                  <dt className="w-[88px]">{term}</dt>
                  <dd>{value}</dd>
                </div>
              ))}
            </dl>
          </fieldset>

          <div className="flex gap-[10px] pt-[3px] pl-px">
            <button
              type="button"
              className="h-[21px] w-[78px] rounded-[3px] border border-[#3c7fb1] bg-linear-to-b from-[#f2f2f2] from-45% to-[#cfcfcf] shadow-[inset_0_0_0_1px_#48d1f5]"
            >
              OK
            </button>
            <button
              type="button"
              className="h-[21px] w-[78px] rounded-[3px] border border-[#707070] bg-linear-to-b from-[#f2f2f2] from-45% to-[#cfcfcf] shadow-[inset_0_0_0_1px_#f8f8f8]"
            >
              Cancel
            </button>
          </div>
        </div>
      </div>
    </div>
  );
}

const indicators = ["Errors", "Circular", "Translate", "READ", "CAPS", "NUM"];

export default function App() {
  return (
    <div className="relative flex h-screen min-h-[640px] flex-col overflow-hidden rounded-t-[6px] border border-[#4a4a4e] bg-[#d7e4f2] font-['Open_Sans','Noto_Sans',sans-serif] text-[11px] leading-4 text-black">
      <Gradients />
      <TitleBar />
      <div className="mx-[7px] mb-[7px] flex min-h-0 flex-1 flex-col bg-white">
        <MenuBar />
        <Toolbar />
        <div className="flex min-h-0 flex-1 gap-[3px] p-[3px]">
          <NavigationPane />
          <EditorPane />
          <ResourcePane />
        </div>
        <footer className="flex h-5 shrink-0 items-center justify-end gap-1 bg-linear-to-b from-[#9a98ba] to-[#f4f4fa] pt-[2px] pr-[3px] text-[#a3a3aa]">
          {indicators.map((name) => (
            <span key={name} className={clsx(name === "NUM" && "text-black")}>{name}</span>
          ))}
        </footer>
      </div>
      <AddressDialog />
    </div>
  );
}
